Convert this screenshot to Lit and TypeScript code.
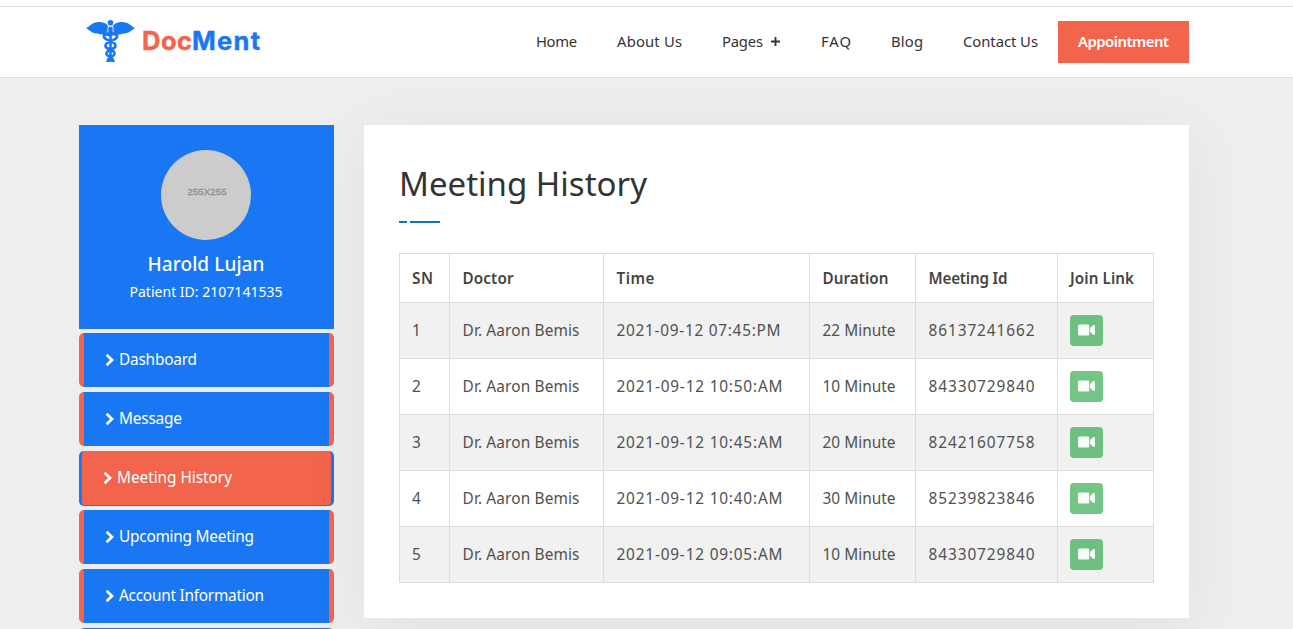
import { LitElement, html, css, svg } from "lit";
import { customElement, property } from "lit/decorators.js";

/** Text run whose tracking is adjusted so that it fills a given advance width. */
@customElement("fit-text")
class FitText extends LitElement {
  @property({ type: Number }) w = 0;
  @property() text = "";
  static styles = css`
    :host { display: inline-block; white-space: pre; }
    span { display: inline-block; }
  `;
  render() {
    return html`<span>${this.text}</span>`;
  }
  updated() {
    const s = this.renderRoot.querySelector("span") as HTMLElement;
    s.style.letterSpacing = "0px";
    const natural = s.getBoundingClientRect().width;
    const gap = (this.w - natural) / Math.max(1, this.text.length - 1);
    s.style.letterSpacing = `${gap}px`;
    s.style.marginRight = `${-gap}px`;
  }
}

const t = (text: string, w: number) => html`<fit-text .text=${text} .w=${w}></fit-text>`;

const chevron = html`<svg class="chev" width="9" height="14" viewBox="0 0 9 14"><path d="M1.6 1.700 L7 7 L1.600 12.300" fill="none" stroke="currentColor" stroke-width="2.700"/></svg>`;
const camera = html`<svg width="17" height="12" viewBox="0 0 17 12" fill="#fff" fill-opacity=".96"><rect x="0" y=".4" width="11.3" height="11.2" rx="1.3"/><path d="M12 4.2 L15 1.3 Q17 .4 17 2 V10 Q17 11.600 15 10.700 L12 7.800 Z"/></svg>`;

const wing = svg`<path d="M23 8 C22 3 15 .6 8.500 2.700 C5 4 3.500 6 0 8.200 C2.500 9.200 3 10.500 5 11.500 C7 13 9.500 13.600 12 13.500 C15 15 18.500 14.600 20.800 12.500 C22.300 11 23 9.500 23 8 Z"/>`;

const rows: [string, string, number, string, string][] = [
  ["1", "2021-09-12 07:45:PM", 164, "22 Minute", "86137241662"],
  ["2", "2021-09-12 10:50:AM", 166, "10 Minute", "84330729840"],
  ["3", "2021-09-12 10:45:AM", 166, "20 Minute", "82421607758"],
  ["4", "2021-09-12 10:40:AM", 166, "30 Minute", "85239823846"],
  ["5", "2021-09-12 09:05:AM", 166, "10 Minute", "84330729840"],
];

@customElement("app-root")
class AppRoot extends LitElement {
  static styles = css`
    :host { display: block; height: 629px; overflow: hidden; background: #eee; color: #444;
      font-family: "Noto Sans", sans-serif; font-size: 15.4px; line-height: 24px; }
    * { box-sizing: border-box; }
    svg { display: block; }
    header { height: 78px; padding-top: 6px; background: #fff; border-bottom: 1px solid #dcdcdc; }
    .bar { height: 71px; border-top: 1px solid #dcdcdc; padding: 0 104px 0 86px; display: flex; align-items: center; }
    .logo { display: flex; align-items: center; gap: 7px; }
    .word { display: flex; font: 700 25.500px/36px Inter, sans-serif; color: #1a77f3; margin-top: -2px; -webkit-text-stroke: .4px currentColor; }
    .word .a { color: #f3644d; }
    nav { margin-left: auto; display: flex; align-items: center; gap: 40px; font-size: 14.800px; color: #333; }
    nav > fit-text, nav .pages, .btn fit-text { padding-bottom: 2px; }
    nav .pages { display: flex; gap: 8px; align-items: center; margin-right: 1px; }
    .btn { width: 131px; height: 42px; margin-left: -20px; background: #f3644d; color: #fff; font-weight: 600;
      display: flex; align-items: center; justify-content: center; }
    main { display: grid; grid-template-columns: 255px 825px; gap: 30px; padding: 47px 0 0 79px; align-items: start; }
    .profile { height: 204px; background: #1a77f3; color: #fff; padding: 25px 1px 0 0; display: flex; flex-direction: column; align-items: center; }
    .avatar { width: 90px; height: 90px; border-radius: 50%; background: #ccc; color: #8f8f8f; display: flex;
      justify-content: center; padding: 35px 0 0 2px; font: 9.600px/14px "Liberation Sans", sans-serif; -webkit-text-stroke: .3px #8f8f8f; }
    .name { font-size: 19px; font-weight: 500; line-height: 26px; margin-top: 11px; }
    .pid { font-size: 14px; line-height: 20px; margin-top: 5px; }
    .item { height: 54px; margin-top: 5px; background: #1a77f3; color: #fff; border: solid #f3644d; border-width: 0 5px;
      border-radius: 5px; padding: 0 0 0 21px; display: flex; align-items: center; gap: 5px; }
    .item fit-text { padding-bottom: 1px; }
    .item:first-child { margin-top: 4px; }
    .item.on { height: 55px; margin-bottom: -1px; background: #f3644d; border-color: #1a77f3; border-width: 0 3px 1px; }
    .card { background: #fff; height: 493px; padding: 35px; box-shadow: 0 10px 60px rgba(0,0,0,.06); position: relative; }
    h1 { margin: 0; font-size: 33px; font-weight: 400; line-height: 48px; color: #333; }
    .rule { display: flex; gap: 3px; margin: 13px 0 30px; height: 2px; }
    .rule i { width: 8px; background: #0c74c4; }
    .rule i + i { width: 30px; }
    table { border-collapse: collapse; table-layout: fixed; width: 754px; }
    td, th { border: 1px solid #dcdcdc; padding: 0 0 0 12.500px; text-align: left; height: 56px; vertical-align: middle; }
    td:first-child, th:first-child, td:last-child, th:last-child { padding-left: 12px; }
    th { height: 49px; font-weight: 600; font-size: 15.200px; padding-bottom: 1px; }
    tbody tr:nth-child(odd) { background: #f1f1f1; }
    .join { width: 33px; height: 31px; border-radius: 4px; background: #73c686; display: flex; align-items: center; justify-content: center; padding-bottom: 2px; }
    tr:nth-child(odd) .join { background: #6ec082; }
    td { color: #505050; }
    .c1 { width: 50px; } .c2 { width: 154px; } .c3 { width: 206px; } .c4 { width: 106px; } .c5 { width: 142px; } .c6 { width: 96px; }
  `;

  item(label: string, w: number, on = false) {
    return html`<div class="item ${on ? "on" : ""}">${chevron}${t(label, w)}</div>`;
  }

  render() {
    return html`
      <header><div class="bar">
        <div class="logo">
          <svg width="49" height="44" viewBox="0 0 49 44" fill="#1a77f3">
            ${wing}<g transform="translate(49 0) scale(-1 1)">${wing}</g>
            <circle cx="24.500" cy="2.800" r="3.400" stroke="#fff" stroke-width="1"/><rect x="21.900" y="6.500" width="5.200" height="10" rx="1.500" stroke="#fff" stroke-width=".8"/>
            <rect x="23.200" y="13" width="2.600" height="29"/>
            <path d="M18 16 Q20 12.500 24 14 Q32 12 31 17 C30 21 19 21 19.500 26 C20 30 29 29 28.500 34 C28 37 22 36 21.500 42 M31 16 Q28 12 24 15 Q17 13 18 17 C19 21 30 21 29.500 26 C29 30 20 29 20.500 34 C21 37 27 36 27.500 42" fill="none" stroke="#1a77f3" stroke-width="2.700"/>
          </svg>
          <div class="word"><span class="a">${t("Doc", 50)}</span>${t("Ment", 68)}</div>
        </div>
        <nav>
          ${t("Home", 41)}${t("About Us", 65)}
          <span class="pages">${t("Pages", 41)}<svg width="9" height="9" viewBox="0 0 9 9"><path d="M4.500 0V9M0 4.500H9" stroke="#333" stroke-width="1.800"/></svg></span>
          ${t("FAQ", 30)}${t("Blog", 32)}${t("Contact Us", 75)}
          <span class="btn">${t("Appointment", 91)}</span>
        </nav>
      </div></header>
      <main>
        <aside>
          <div class="profile">
            <div class="avatar">${t("255X255", 39)}</div>
            <div class="name">${t("Harold Lujan", 117)}</div>
            <div class="pid">${t("Patient ID: 2107141535", 153)}</div>
          </div>
          <div class="menu">
            ${this.item("Dashboard", 78)}${this.item("Message", 63)}${this.item("Meeting History", 115, true)}
            ${this.item("Upcoming Meeting", 135)}${this.item("Account Information", 145)}
            <div class="item"></div>
          </div>
        </aside>
        <section class="card">
          <h1>${t("Meeting History", 248)}</h1>
          <div class="rule"><i></i><i></i></div>
          <table>
            <thead><tr>
              <th class="c1">${t("SN", 21)}</th><th class="c2">${t("Doctor", 51)}</th><th class="c3">${t("Time", 38)}</th>
              <th class="c4">${t("Duration", 66)}</th><th class="c5">${t("Meeting Id", 79)}</th><th class="c6">${t("Join Link", 64)}</th>
            </tr></thead>
            <tbody>${rows.map(([n, time, tw, dur, id]) => html`<tr>
              <td>${n}</td><td>${t("Dr. Aaron Bemis", 117)}</td><td>${t(time, tw)}</td><td>${t(dur, 73)}</td><td>${t(id, 106)}</td>
              <td><span class="join">${camera}</span></td></tr>`)}</tbody>
          </table>
        </section>
      </main>`;
  }
}
